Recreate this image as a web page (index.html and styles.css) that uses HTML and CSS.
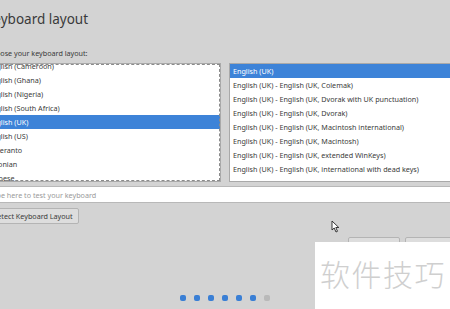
FILE: index.html
```html
<!DOCTYPE html>
<html lang="en">
<head>
    <meta charset="UTF-8">
    <title>Keyboard layout</title>
    <link rel="stylesheet" href="styles.css">
</head>
<body>
    <div class="page">
        <h1 class="title">Keyboard layout</h1>
        <div class="label">Choose your keyboard layout:</div>

        <div class="lists">
            <div class="list layouts">
                <div class="list-inner">
                    <div class="row">English (Cameroon)</div>
                    <div class="row">English (Ghana)</div>
                    <div class="row">English (Nigeria)</div>
                    <div class="row">English (South Africa)</div>
                    <div class="row selected">English (UK)</div>
                    <div class="row">English (US)</div>
                    <div class="row">Esperanto</div>
                    <div class="row">Estonian</div>
                    <div class="row">Faroese</div>
                </div>
            </div>
            <div class="list variants">
                <div class="row selected">English (UK)</div>
                <div class="row">English (UK) - English (UK, Colemak)</div>
                <div class="row">English (UK) - English (UK, Dvorak with UK punctuation)</div>
                <div class="row">English (UK) - English (UK, Dvorak)</div>
                <div class="row">English (UK) - English (UK, Macintosh international)</div>
                <div class="row">English (UK) - English (UK, Macintosh)</div>
                <div class="row">English (UK) - English (UK, extended WinKeys)</div>
                <div class="row">English (UK) - English (UK, international with dead keys)</div>
            </div>
        </div>

        <input class="test-input" type="text" placeholder="Type here to test your keyboard">

        <div class="detect-row">
            <button class="btn">Detect Keyboard Layout</button>
        </div>

        <!-- back / continue, mostly hidden under the watermark -->
        <div class="nav">
            <span class="btn nav-btn"></span>
            <span class="btn nav-btn"></span>
        </div>
    </div>

    <div class="dots">
        <span class="dot done"></span>
        <span class="dot done"></span>
        <span class="dot done"></span>
        <span class="dot done"></span>
        <span class="dot done"></span>
        <span class="dot done"></span>
        <span class="dot"></span>
    </div>

    <!-- mouse pointer -->
    <svg class="cursor" width="9" height="13" viewBox="0 0 9 13">
        <path d="M1 1 L1 10 L3.2 8 L5 12 L6.5 11.3 L4.8 7.5 L7.8 7.5 Z" fill="#fff" stroke="#222" stroke-width="0.9" stroke-linejoin="round"/>
    </svg>

    <div class="watermark">软件技巧</div>
</body>
</html>
```

FILE: styles.css
```css
body {
    margin: 0;
    width: 450px;
    height: 309px;
    overflow: hidden;
    position: relative;
    background: #d3d3d3;
    font-family: 'Noto Sans', 'Open Sans', sans-serif;
    color: #333;
}

.page {
    margin-left: -16px;
    width: 520px;
}

.title {
    margin: 0;
    padding: 10px 0 0 1px;
    height: 20px;
    font-size: 13.5px;
    font-weight: normal;
    color: #3a3a3a;
    line-height: 18px;
}

.label {
    margin-top: 18px;
    padding-left: 3px;
    font-size: 7.2px;
    line-height: 10px;
    color: #3a3a3a;
}

.lists {
    margin-top: 5px;
    display: grid;
    grid-template-columns: 237px 1fr;
    gap: 8px;
    height: 119px;
}

.list {
    background: #fff;
    border: 1px solid #a9a9a9;
    overflow: hidden;
}

.layouts {
    outline: 1px dashed #8a8a8a;
    outline-offset: -2px;
}

.list-inner {
    margin-top: -5px;
}

.row {
    height: 14px;
    line-height: 14px;
    padding-left: 3px;
    font-size: 7.2px;
    white-space: nowrap;
    color: #3a3a3a;
}

.row.selected {
    background: #3d83d8;
    color: #fff;
}

.test-input {
    display: block;
    box-sizing: border-box;
    margin-top: 4px;
    width: 100%;
    height: 17px;
    border: 1px solid #b8b8b8;
    background: #fff;
    padding: 0 4px;
    font-family: inherit;
    font-size: 7.2px;
    color: #333;
    outline: none;
}

.test-input::placeholder {
    color: #9a9a9a;
}

.detect-row {
    margin-top: 5px;
    padding-left: 2px;
    display: flex;
}

.btn {
    box-sizing: border-box;
    height: 16px;
    padding: 0 5px;
    border: 1px solid #b4b4b4;
    border-radius: 2px;
    background: #dddddd;
    font-family: inherit;
    font-size: 7.2px;
    color: #3a3a3a;
}

.nav {
    margin-top: 13px;
    display: flex;
    justify-content: flex-end;
    gap: 5px;
    padding-right: 47px;
}

.nav-btn {
    width: 52px;
    height: 20px;
}

.dots {
    position: absolute;
    left: 0;
    right: 0;
    top: 295px;
    display: flex;
    justify-content: center;
    gap: 8px;
}

.dot {
    width: 6px;
    height: 6px;
    border-radius: 2px;
    background: #b9b9b9;
}

.dot.done {
    background: #3a7fd5;
}

.cursor {
    position: absolute;
    left: 331px;
    top: 220px;
}

.watermark {
    position: absolute;
    left: 315px;
    top: 242px;
    width: 135px;
    height: 67px;
    background: #fff;
    box-sizing: border-box;
    padding: 14px 0 0 5px;
    font-family: 'Noto Sans CJK SC', sans-serif;
    font-weight: 300;
    font-size: 30px;
    line-height: 34px;
    letter-spacing: 1.5px;
    color: #cfcfcf;
    white-space: nowrap;
}
```
